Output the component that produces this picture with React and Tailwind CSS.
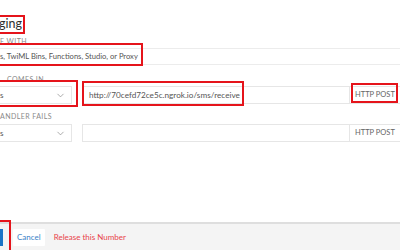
import { ChevronDown } from "lucide-react";

const Label = ({ children, className = "" }) => (
  <div
    className={`text-[7px] leading-[8px] uppercase tracking-[0.06em] text-[#8a8a8a] ${className}`}
  >
    {children}
  </div>
);

const Select = ({ value }) => (
  <div className="w-[72px] h-[18px] shrink-0 border border-l-0 border-[#e6e6e6] bg-white flex items-center justify-between pr-[5px] text-[8px] text-[#555]">
    <span>{value}</span>
    <ChevronDown size={11} strokeWidth={1.5} className="text-[#888]" />
  </div>
);

const UrlRow = ({ url }) => (
  <div className="flex ml-[10px] flex-1 h-[18px]">
    <div className="w-[268px] border border-[#e6e6e6] bg-white flex items-center pl-[6px] text-[8.2px] text-[#555]">
      {url}
    </div>
    <div className="flex-1 border border-l-0 border-r-0 border-[#e6e6e6] bg-white flex items-center pl-[5px] text-[7.5px] text-[#666]">
      HTTP POST
    </div>
  </div>
);

const Box = ({ className }) => (
  <div className={`absolute border-2 border-[#e5141b] pointer-events-none ${className}`} />
);

export default function App() {
  return (
    <div
      className="relative w-[400px] h-[250px] bg-white overflow-hidden flex flex-col"
      style={{ fontFamily: "Lato, 'Open Sans', sans-serif" }}
    >
      <div className="pt-[10px] h-[29px]">
        <span className="inline-block ml-[-3px] pr-[1px] h-[19px] border-2 border-[#e5141b] text-[12.5px] leading-[14px] text-[#2f2f2f]">
          ging
        </span>
      </div>

      <Label className="mt-[8px]">E With</Label>

      <div className="mt-[3px] h-[17px] border-y border-[#ececec] flex items-center text-[7.6px] text-[#555]">
        s, TwiML Bins, Functions, Studio, or Proxy
      </div>

      <Label className="mt-[10px] pl-[7px]">Comes In</Label>

      <div className="mt-[3px] flex">
        <Select value="s" />
        <UrlRow url="http://70cefd72ce5c.ngrok.io/sms/receive" />
      </div>

      <Label className="mt-[8px]">Andler Fails</Label>

      <div className="mt-[4px] flex">
        <Select value="s" />
        <UrlRow url="" />
      </div>

      <div className="mt-auto h-[28px] border-t-2 border-[#dedede] bg-[#f4f4f4] flex items-center gap-[10px]">
        <div className="w-[3px] h-[17px] bg-[#1a74c6]" />
        <div className="h-[17px] px-[4px] bg-white rounded-[1px] flex items-center text-[8px] text-[#3b82c8]">
          Cancel
        </div>
        <div className="text-[8px] text-[#e8434b] ml-[-1px]">Release this Number</div>
      </div>

      <Box className="left-[-2px] top-[43px] w-[145px] h-[23px]" />
      <Box className="left-[-2px] top-[80px] w-[80px] h-[27px]" />
      <Box className="left-[82px] top-[81px] w-[162px] h-[25px]" />
      <Box className="left-[351px] top-[83px] w-[47px] h-[20px]" />
      <Box className="left-[-2px] top-[220px] w-[13px] h-[32px]" />
    </div>
  );
}
